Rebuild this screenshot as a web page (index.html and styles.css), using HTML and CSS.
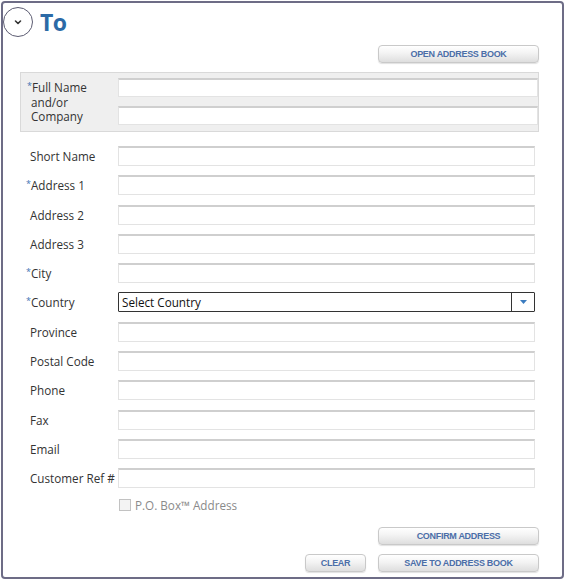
FILE: index.html
```html
<!DOCTYPE html>
<html>
<head>
<meta charset="utf-8">
<link rel="stylesheet" href="styles.css">
</head>
<body>
<div class="panel">
  <div class="header">
    <span class="toggle">
      <svg width="10" height="7" viewBox="0 0 10 7"><path d="M2.5 2 L5 4.5 L7.5 2" fill="none" stroke="#333" stroke-width="1.6" stroke-linecap="round" stroke-linejoin="round"/></svg>
    </span>
    <h1 class="title">To</h1>
  </div>
  <div class="btn-row top-row">
    <button class="btn wide">OPEN ADDRESS BOOK</button>
  </div>
  <div class="name-box">
    <div class="name-label">
      <div class="nl"><span class="req">*</span>Full Name</div>
      <div class="nl">and/or</div>
      <div class="nl">Company</div>
    </div>
    <div class="name-inputs">
      <input class="field name" type="text">
      <input class="field name" type="text">
    </div>
  </div>
  <div class="rows">
    <label class="lbl">Short Name</label><input class="field" type="text">
    <label class="lbl"><span class="req">*</span>Address 1</label><input class="field" type="text">
    <label class="lbl">Address 2</label><input class="field" type="text">
    <label class="lbl">Address 3</label><input class="field" type="text">
    <label class="lbl"><span class="req">*</span>City</label><input class="field" type="text">
    <label class="lbl"><span class="req">*</span>Country</label>
    <div class="select">
      <span class="select-text">Select Country</span>
      <span class="select-arrow"><svg width="7" height="4" viewBox="0 0 7 4"><path d="M0 0 H7 L3.5 4 Z" fill="#3b7cc0"/></svg></span>
    </div>
    <label class="lbl">Province</label><input class="field" type="text">
    <label class="lbl">Postal Code</label><input class="field" type="text">
    <label class="lbl">Phone</label><input class="field" type="text">
    <label class="lbl">Fax</label><input class="field" type="text">
    <label class="lbl">Email</label><input class="field" type="text">
    <label class="lbl">Customer Ref #</label><input class="field" type="text">
  </div>
  <div class="pobox">
    <span class="check"></span>
    <span class="pobox-text">P.O. Box™ Address</span>
  </div>
  <div class="btn-row confirm-row">
    <button class="btn wide">CONFIRM ADDRESS</button>
  </div>
  <div class="btn-row save-row">
    <button class="btn small">CLEAR</button>
    <button class="btn wide">SAVE TO ADDRESS BOOK</button>
  </div>
</div>
</body>
</html>
```

FILE: styles.css
```css
* { box-sizing: border-box; }
html, body { margin: 0; padding: 0; background: #fff; }
body { font-family: "Open Sans", "Noto Sans", sans-serif; font-size: 11.7px; color: #333; }

.panel {
  margin: 1px;
  width: 563px;
  height: 578px;
  border: 2px solid #6d6c86;
  border-radius: 4px;
  display: flex;
  flex-direction: column;
}

.header {
  display: flex;
  align-items: center;
  margin-top: 4px;
  height: 30px;
}
.toggle {
  width: 30px;
  height: 30px;
  border: 1.5px solid #5c5c72;
  border-radius: 50%;
  display: flex;
  align-items: center;
  justify-content: center;
}
.title {
  margin: 0 0 0 7px;
  font-family: "Open Sans", sans-serif;
  font-weight: 700;
  font-size: 23px;
  color: #2c6aa6;
  line-height: 30px;
  letter-spacing: -0.5px;
}

.btn-row { display: flex; justify-content: flex-end; padding-right: 23px; gap: 12px; }
.top-row { margin-top: 8px; }
.btn {
  height: 18px;
  border: 1px solid #c9c9c9;
  border-radius: 4px;
  background: linear-gradient(#ffffff 0%, #f3f3f3 45%, #dedede 100%);
  font-family: "Liberation Sans", Arial, sans-serif;
  font-weight: 700;
  font-size: 9px;
  color: #4b6ea8;
  letter-spacing: -0.3px;
  padding: 0;
  box-shadow: 0 1px 1px rgba(0,0,0,0.12);
}
.btn.wide { width: 161px; }
.btn.small { width: 61px; }

.name-box {
  margin: 9px 0 0 17px;
  width: 519px;
  height: 60px;
  border: 1px solid #d9d9d9;
  background: #efefef;
  display: flex;
  padding: 5px 0 4px 10px;
}
.name-label {
  width: 87px;
  padding-top: 2px;
}
.nl { height: 14.5px; line-height: 14.5px; white-space: nowrap; }
.name-inputs {
  display: flex;
  flex-direction: column;
  gap: 9px;
}
.field {
  display: block;
  width: 417px;
  height: 20px;
  margin: 0;
  border: 1px solid #e3e3e3;
  border-top: 2px solid #cfcfcf;
  background: #fff;
  font: inherit;
  padding: 0 3px;
}
.field.name { width: 420px; height: 19px; }

.req { color: #3f73b5; font-size: 9px; vertical-align: 3px; margin-left: -4px; line-height: 0; }

.rows {
  margin: 14px 0 0 27px;
  display: grid;
  grid-template-columns: 88px 417px;
  grid-auto-rows: 20px;
  row-gap: 9.3px;
  align-items: center;
}
.lbl { line-height: 20px; height: 20px; white-space: nowrap; }

.select {
  width: 417px;
  height: 20px;
  border: 1px solid #333;
  border-radius: 1px;
  display: flex;
  align-items: center;
}
.select-text { flex: 1; padding-left: 3px; color: #111; }
.select-arrow {
  width: 23px;
  height: 100%;
  border-left: 1px solid #333;
  display: flex;
  align-items: center;
  justify-content: center;
}

.pobox {
  margin: 10px 0 0 116px;
  display: flex;
  align-items: center;
  gap: 4px;
  height: 14px;
}
.check {
  width: 12px;
  height: 12px;
  border: 1px solid #c2c2c2;
  background: #f3f3f3;
}
.pobox-text { color: #8a8a8a; }

.confirm-row { margin-top: 15px; }
.save-row { margin-top: 9px; }
```
